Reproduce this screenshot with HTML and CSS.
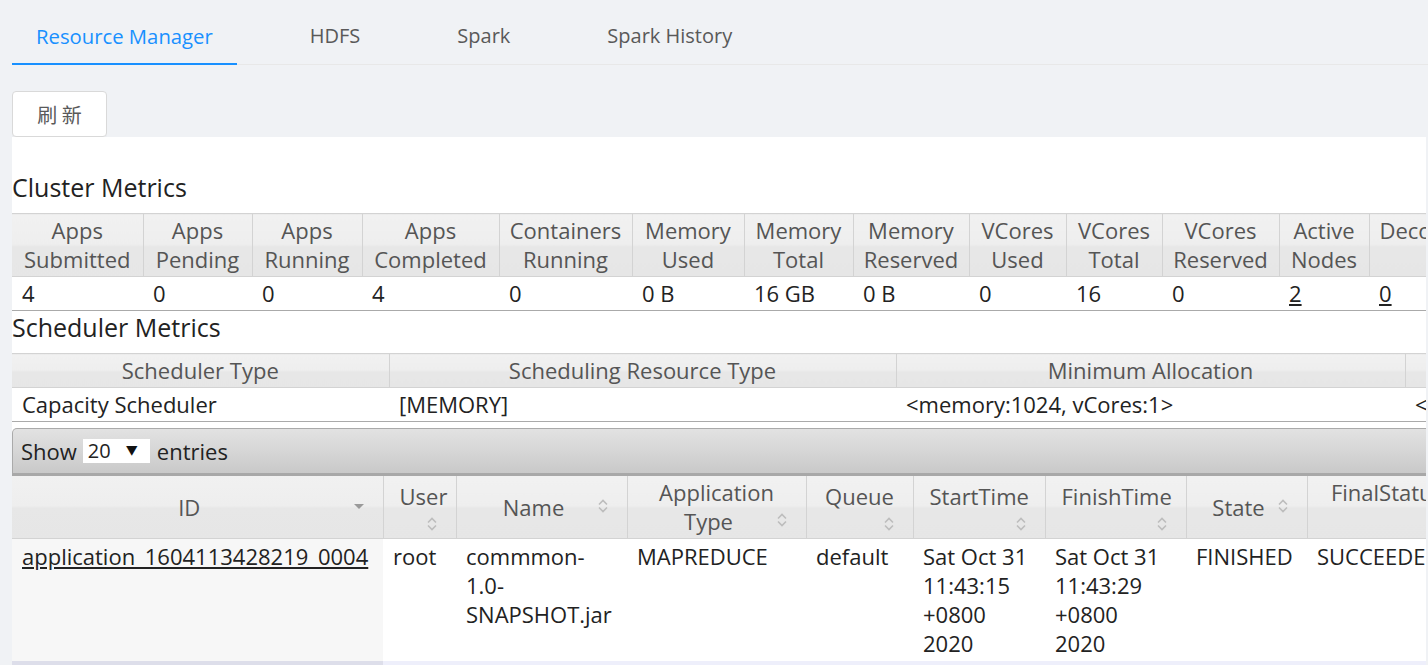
FILE: index.html
```html
<!DOCTYPE html>
<html lang="zh">
<head>
<meta charset="utf-8">
<title>Resource Manager</title>
<link rel="stylesheet" href="styles.css">
</head>
<body>
<div class="page">
  <nav class="tabs">
    <div class="tab active">Resource Manager</div>
    <div class="tab">HDFS</div>
    <div class="tab">Spark</div>
    <div class="tab">Spark History</div>
  </nav>
  <button class="btn" type="button">刷 新</button>
  <div class="frame">
    <h3 class="sec">Cluster Metrics</h3>
    <table class="grid metrics">
      <colgroup>
        <col class="w131"><col class="w109"><col class="w110"><col class="w137"><col class="w133"><col class="w112"><col class="w109"><col class="w116"><col class="w97"><col class="w96"><col class="w117"><col class="w90"><col class="w186"><col class="w120"><col class="w120"><col class="w120">
      </colgroup>
      <thead>
        <tr>
          <th>Apps<br>Submitted</th><th>Apps<br>Pending</th><th>Apps<br>Running</th><th>Apps<br>Completed</th><th>Containers<br>Running</th><th>Memory<br>Used</th><th>Memory<br>Total</th><th>Memory<br>Reserved</th><th>VCores<br>Used</th><th>VCores<br>Total</th><th>VCores<br>Reserved</th><th>Active<br>Nodes</th><th>Decommissioned<br>Nodes</th><th>Lost<br>Nodes</th><th>Unhealthy<br>Nodes</th><th>Rebooted<br>Nodes</th>
        </tr>
      </thead>
      <tbody>
        <tr>
          <td>4</td><td>0</td><td>0</td><td>4</td><td>0</td><td>0 B</td><td>16 GB</td><td>0 B</td><td>0</td><td>16</td><td>0</td><td><a href="#">2</a></td><td><a href="#">0</a></td><td><a href="#">0</a></td><td><a href="#">0</a></td><td><a href="#">0</a></td>
        </tr>
      </tbody>
    </table>
    <h3 class="sec">Scheduler Metrics</h3>
    <table class="grid sched">
      <colgroup>
        <col class="w377"><col class="w507"><col class="w509"><col class="w509"><col class="w300">
      </colgroup>
      <thead>
        <tr><th>Scheduler Type</th><th>Scheduling Resource Type</th><th>Minimum Allocation</th><th>Maximum Allocation</th><th>Maximum Cluster Application Priority</th></tr>
      </thead>
      <tbody>
        <tr><td>Capacity Scheduler</td><td>[MEMORY]</td><td>&lt;memory:1024, vCores:1&gt;</td><td>&lt;memory:8192, vCores:4&gt;</td><td>0</td></tr>
      </tbody>
    </table>
    <div class="dt">
      <div class="toolbar">
        <span>Show</span>
        <span class="select"><span class="sel-val">20</span><span class="sel-arrow">▼</span></span>
        <span>entries</span>
      </div>
      <table class="grid apps">
        <colgroup>
          <col class="w371"><col class="w73"><col class="w171"><col class="w179"><col class="w107"><col class="w132"><col class="w141"><col class="w121"><col class="w160"><col class="w140"><col class="w140">
        </colgroup>
        <thead>
          <tr>
            <th>ID<svg class="si" viewBox="0 0 16 16"><path d="M3 6h10l-5 5z" fill="#9a9a9a"/></svg></th>
            <th>User<br><svg class="si" viewBox="0 0 16 16"><path d="M4 6.5 8 2.5 12 6.5M4 9.5 8 13.5 12 9.5" fill="none" stroke="#bdbdbd" stroke-width="1.6"/></svg></th>
            <th>Name<svg class="si" viewBox="0 0 16 16"><path d="M4 6.5 8 2.5 12 6.5M4 9.5 8 13.5 12 9.5" fill="none" stroke="#bdbdbd" stroke-width="1.6"/></svg></th>
            <th>Application<br>Type<svg class="si" viewBox="0 0 16 16"><path d="M4 6.5 8 2.5 12 6.5M4 9.5 8 13.5 12 9.5" fill="none" stroke="#bdbdbd" stroke-width="1.6"/></svg></th>
            <th>Queue<br><svg class="si" viewBox="0 0 16 16"><path d="M4 6.5 8 2.5 12 6.5M4 9.5 8 13.5 12 9.5" fill="none" stroke="#bdbdbd" stroke-width="1.6"/></svg></th>
            <th>StartTime<br><svg class="si" viewBox="0 0 16 16"><path d="M4 6.5 8 2.5 12 6.5M4 9.5 8 13.5 12 9.5" fill="none" stroke="#bdbdbd" stroke-width="1.6"/></svg></th>
            <th>FinishTime<br><svg class="si" viewBox="0 0 16 16"><path d="M4 6.5 8 2.5 12 6.5M4 9.5 8 13.5 12 9.5" fill="none" stroke="#bdbdbd" stroke-width="1.6"/></svg></th>
            <th>State<svg class="si" viewBox="0 0 16 16"><path d="M4 6.5 8 2.5 12 6.5M4 9.5 8 13.5 12 9.5" fill="none" stroke="#bdbdbd" stroke-width="1.6"/></svg></th>
            <th class="top">FinalStatus<br><svg class="si" viewBox="0 0 16 16"><path d="M4 6.5 8 2.5 12 6.5M4 9.5 8 13.5 12 9.5" fill="none" stroke="#bdbdbd" stroke-width="1.6"/></svg></th>
            <th>Progress<svg class="si" viewBox="0 0 16 16"><path d="M4 6.5 8 2.5 12 6.5M4 9.5 8 13.5 12 9.5" fill="none" stroke="#bdbdbd" stroke-width="1.6"/></svg></th>
            <th>Tracking UI</th>
          </tr>
        </thead>
        <tbody>
          <tr class="r1">
            <td class="sorted"><a href="#">application_1604113428219_0004</a></td>
            <td>root</td>
            <td>commmon-<br>1.0-<br>SNAPSHOT.jar</td>
            <td>MAPREDUCE</td>
            <td>default</td>
            <td>Sat Oct 31<br>11:43:15<br>+0800<br>2020</td>
            <td>Sat Oct 31<br>11:43:29<br>+0800<br>2020</td>
            <td>FINISHED</td>
            <td>SUCCEEDED</td>
            <td></td>
            <td><a href="#">History</a></td>
          </tr>
          <tr class="r2">
            <td class="sorted"><a href="#">application_1604113428219_0003</a></td>
            <td>root</td>
            <td>commmon-<br>1.0-<br>SNAPSHOT.jar</td>
            <td>MAPREDUCE</td>
            <td>default</td>
            <td>Sat Oct 31<br>11:40:02<br>+0800<br>2020</td>
            <td>Sat Oct 31<br>11:40:16<br>+0800<br>2020</td>
            <td>FINISHED</td>
            <td>SUCCEEDED</td>
            <td></td>
            <td><a href="#">History</a></td>
          </tr>
        </tbody>
      </table>
    </div>
  </div>
</div>
</body>
</html>
```
FILE: styles.css
```css
* { box-sizing: border-box; }
html, body { height: 100%; }
body {
  margin: 0;
  background: #f0f2f5;
  font-family: "Open Sans", "Noto Sans CJK SC", sans-serif;
  overflow: hidden;
}
.page { padding: 0 2px 0 12px; }

.tabs {
  display: flex;
  align-items: flex-start;
  padding-top: 10px;
  border-bottom: 1px solid #e8e8e8;
  margin-right: -2px;
}
.tab {
  padding: 11px 24px 13px;
  margin-right: 49px;
  font-size: 20px;
  line-height: 30px;
  color: #595959;
  white-space: nowrap;
}
.tab.active {
  font-size: 20.3px;
  color: #1890ff;
  border-bottom: 2px solid #1890ff;
  padding-bottom: 12px;
  margin-bottom: -1px;
}

.btn {
  display: block;
  margin-top: 26px;
  width: 95px;
  height: 46px;
  padding: 0;
  background: #fff;
  border: 1px solid #d9d9d9;
  border-radius: 4px;
  font-family: "Noto Sans CJK SC", sans-serif;
  font-size: 20px;
  color: #595959;
  box-shadow: 0 2px 0 rgba(0,0,0,0.015);
}

.frame {
  background: #fff;
  height: 600px;
  overflow: hidden;
  padding-top: 33px;
  color: #222;
}
.sec {
  margin: 0 0 9px;
  font-size: 25px;
  line-height: 34px;
  font-weight: normal;
  color: #222;
}
.metrics + .sec { margin-top: -1px; }

.grid {
  border-collapse: collapse;
  table-layout: fixed;
  font-size: 22px;
  line-height: 29px;
  color: #222;
}
.grid th {
  font-weight: normal;
  color: #555;
  background: linear-gradient(#f1f1f1 0%, #eeeeee 48%, #e7e7e7 52%, #e6e6e6 100%);
  border-top: 1px solid #d3d3d3;
  border-right: 1px solid #d3d3d3;
  border-bottom: 1px solid #d3d3d3;
  padding: 2px 10px;
  text-align: center;
  vertical-align: middle;
  white-space: nowrap;
}
.grid td {
  padding: 2px 10px;
  text-align: left;
  vertical-align: top;
  border-bottom: 1px solid #aaa;
  white-space: nowrap;
}
.grid a { color: #222; text-decoration: underline; }

.metrics { width: 1903px; }
.sched { width: 2202px; }

.w73 { width: 73px; } .w90 { width: 90px; } .w96 { width: 96px; } .w97 { width: 97px; }
.w107 { width: 107px; } .w109 { width: 109px; } .w110 { width: 110px; } .w112 { width: 112px; }
.w116 { width: 116px; } .w117 { width: 117px; } .w120 { width: 120px; } .w121 { width: 121px; }
.w131 { width: 131px; } .w132 { width: 132px; } .w133 { width: 133px; } .w137 { width: 137px; }
.w140 { width: 140px; } .w141 { width: 141px; } .w160 { width: 160px; } .w171 { width: 171px; }
.w179 { width: 179px; } .w186 { width: 186px; } .w300 { width: 300px; } .w371 { width: 371px; }
.w377 { width: 377px; } .w507 { width: 507px; } .w509 { width: 509px; }

.dt { width: 1735px; margin-top: 6px; }
.toolbar {
  display: flex;
  align-items: center;
  height: 48px;
  padding: 0 8px;
  border: 1px solid #aaa;
  border-bottom: 3px solid #a8a8a8;
  border-radius: 5px 0 0 0;
  background: linear-gradient(#e2e2e2 0%, #d6d6d6 50%, #c9c9c9 100%);
  font-size: 22px;
  color: #222;
}
.select {
  display: flex;
  align-items: center;
  justify-content: space-between;
  width: 67px;
  height: 24px;
  margin: 0 7px 0 6px;
  padding: 0 12px 0 5px;
  background: #fff;
  font-size: 20px;
  line-height: 24px;
}
.sel-arrow { font-size: 12px; color: #111; }

.apps { width: 1735px; }
.apps th {
  padding: 2px 16px;
  border-top: none;
}
.apps th.top { vertical-align: top; }
.si {
  float: right;
  width: 16px;
  height: 16px;
  margin-top: 5px;
}
.apps td {
  padding: 3px 10px;
  border-bottom: none;
}
.apps .r1 td { background: #fff; }
.apps .r1 td.sorted { background: #f7f7f7; }
.apps .r2 td { background: #eeeffb; }
.apps .r2 td.sorted { background: #dddeea; }
```
